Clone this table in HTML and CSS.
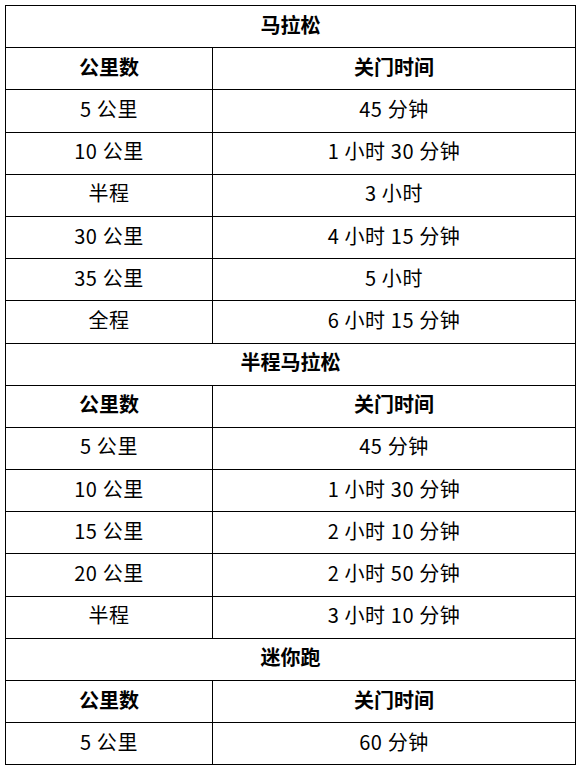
FILE: index.html
```html
<!DOCTYPE html>
<html lang="zh">
<head>
<meta charset="utf-8">
<link rel="stylesheet" href="styles.css">
</head>
<body>
<table class="cutoff">
  <colgroup><col class="c1"><col class="c2"></colgroup>
  <tbody>
    <tr><th colspan="2">马拉松</th></tr>
    <tr><th>公里数</th><th>关门时间</th></tr>
    <tr><td>5 公里</td><td>45 分钟</td></tr>
    <tr><td>10 公里</td><td>1 小时 30 分钟</td></tr>
    <tr><td>半程</td><td>3 小时</td></tr>
    <tr><td>30 公里</td><td>4 小时 15 分钟</td></tr>
    <tr><td>35 公里</td><td>5 小时</td></tr>
    <tr><td>全程</td><td>6 小时 15 分钟</td></tr>
    <tr><th colspan="2">半程马拉松</th></tr>
    <tr><th>公里数</th><th>关门时间</th></tr>
    <tr><td>5 公里</td><td>45 分钟</td></tr>
    <tr><td>10 公里</td><td>1 小时 30 分钟</td></tr>
    <tr><td>15 公里</td><td>2 小时 10 分钟</td></tr>
    <tr><td>20 公里</td><td>2 小时 50 分钟</td></tr>
    <tr><td>半程</td><td>3 小时 10 分钟</td></tr>
    <tr><th colspan="2">迷你跑</th></tr>
    <tr><th>公里数</th><th>关门时间</th></tr>
    <tr><td>5 公里</td><td>60 分钟</td></tr>
  </tbody>
</table>
</body>
</html>
```
FILE: styles.css
```css
html, body {
  margin: 0;
  padding: 0;
  background: #ffffff;
}
body {
  padding: 5px 5px 0 5px;
  font-family: "Noto Sans CJK SC", "Noto Sans", sans-serif;
  color: #000;
}
.cutoff {
  border-collapse: collapse;
  width: 570px;
  table-layout: fixed;
  font-size: 20px;
}
.c1 { width: 207px; }
.c2 { width: 363px; }
.cutoff tr { height: 42.2px; }
.cutoff th, .cutoff td {
  border: 1px solid #000;
  text-align: center;
  vertical-align: middle;
  padding: 0 0 4px 0;
  line-height: 24px;
}
.cutoff td { font-weight: 400; letter-spacing: 0.6px; }
.cutoff th { font-weight: 700; letter-spacing: 0; }
```
